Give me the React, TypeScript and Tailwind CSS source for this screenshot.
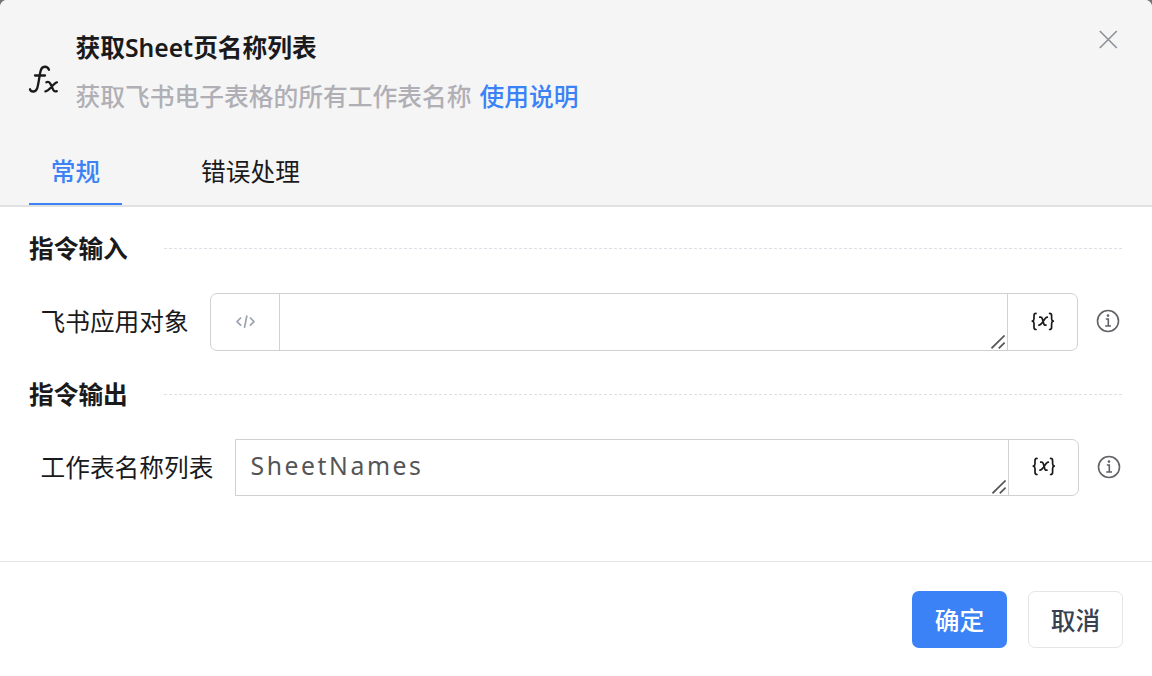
import type { ReactNode } from 'react';

function FunctionIcon() {
  return (
    <svg className="h-[32px] w-[32px] shrink-0" viewBox="0 0 32 32" fill="none" stroke="#1a1a1c" strokeWidth="2.300" strokeLinecap="round" strokeLinejoin="round">
      <path d="M3 26.300c.9 2.900 5.500 3.200 7.100-.8 1.500-3.900 2.200-12.900 3.600-17.900 1.300-4.900 6.500-5.100 8.300-.8" />
      <path d="M8 12.500h10" />
      <path d="M19.400 19.200c2.200-.9 3.200-.1 4 1.600l2.800 6c.8 1.600 1.800 2 3.600 1.300M30 19.300c-3.200 0-7.400 9.200-11.600 9" />
    </svg>
  );
}

function CodeIcon() {
  return (
    <svg className="h-[14px] w-[20px]" viewBox="0 0 20 14" fill="none" stroke="#9ca3af" strokeWidth="1.700" strokeLinecap="round" strokeLinejoin="round">
      <path d="M5.600 3 2 6.600l3.600 3.600M15.400 3 19 6.600l-3.600 3.600M11.800 1 9.600 12.200" />
    </svg>
  );
}

function VariableIcon() {
  return (
    <svg className="h-[20px] w-[24px]" viewBox="0 0 24 20" fill="none" stroke="#1a1a1c" strokeWidth="1.700" strokeLinecap="round" strokeLinejoin="round">
      <path d="M5 1.400C3.500 1.400 3 2.300 3 3.700v3c0 1.500-.5 2.200-1.700 2.400C2.500 9.300 3 10.100 3 11.500v3.700c0 1.400.5 2.300 2 2.300M18.600 1.400c1.500 0 2 .9 2 2.300v3c0 1.500.5 2.200 1.700 2.400-1.200.2-1.700 1-1.700 2.400v3.700c0 1.400-.5 2.300-2 2.300" />
      <path d="M8.800 5.200c1.700-.4 2.200.4 2.600 1.700l1.300 4.600c.4 1.400 1 2 2.300 1.600M16.300 5.200c-2.800 0-5.200 8-8.400 7.900" />
    </svg>
  );
}

function InfoIcon() {
  return (
    <svg className="h-[24px] w-[24px] shrink-0" viewBox="0 0 24 24" fill="none" stroke="#606266" strokeWidth="1.600">
      <circle cx="12" cy="12" r="10.500" />
      <path d="M9.800 10h2.500v6.800M9.200 17h5.800" />
      <circle cx="12" cy="6.600" r="1.300" fill="#606266" stroke="none" />
    </svg>
  );
}

function ResizeGrip() {
  return (
    <svg className="absolute right-[1px] bottom-[1px] h-[14px] w-[15px]" viewBox="0 0 15 14" fill="none" stroke="#555" strokeWidth="1.700">
      <path d="M.5 13.300 13.600.5M7.800 13.300l5.800-5.600" />
    </svg>
  );
}

function SectionTitle({ children }: { children: ReactNode }) {
  return (
    <div className="flex h-[40px] items-center">
      <h2 className="w-[135px] shrink-0 pt-[2px] font-bold">{children}</h2>
      <div className="-mr-px h-px flex-1 bg-[repeating-linear-gradient(90deg,#dcdfe6_0_3px,transparent_3px_5px)]" />
    </div>
  );
}

export default function App() {
  return (
    <div className="h-[676px] w-[1152px] overflow-hidden bg-[#747474]">
      <div className="flex h-full flex-col rounded-t-[7px] bg-white font-['Noto_Sans','Noto_Sans_CJK_SC',sans-serif] text-[24.700px] leading-[36px] text-[#1a1a1c]">
        <header className="flex h-[207px] flex-col rounded-t-[7px] border-b-2 border-[#e2e2e3] bg-[#f5f5f5] px-[29px]">
          <div className="flex h-[138px]">
            <div className="w-[46.500px] pt-[63px]"><div className="-ml-[2px]"><FunctionIcon /></div></div>
            <div className="flex-1 pt-[30px]">
              <h1 className="whitespace-nowrap font-bold"><span>获取</span><span className="font-semibold">Sheet</span><span>页名称列表</span></h1>
              <p className="mt-[13px] whitespace-nowrap text-[24.750px] font-medium text-[#b0afb5]">获取飞书电子表格的所有工作表名称<span className="tracking-[1.500px]"> </span><a className="text-[#3b82f6]">使用说明</a></p>
            </div>
            <button aria-label="关闭" className="mt-[30px] mr-[5px] h-[20px] w-[20px]">
              <svg viewBox="0 0 20 20" fill="none" stroke="#909399" strokeWidth="1.700"><path d="m1.800 1 17 17M18.800 1l-17 17" /></svg>
            </button>
          </div>
          <nav className="flex h-[67px]">
            <button className="w-[93px] border-b-2 border-[#3b82f6] pt-[2px] font-medium text-[#3b82f6]">常规</button>
            <button className="ml-[50px] w-[157px] border-b-2 border-transparent pt-[2px]">错误处理</button>
          </nav>
        </header>

        <main className="h-[354px] px-[29px] pt-[21px]">
          <SectionTitle>指令输入</SectionTitle>
          <div className="mt-[25px] flex h-[58px] items-center pl-[11.500px]">
            <label className="w-[169.500px] shrink-0">飞书应用对象</label>
            <div className="flex h-[58px] w-[868px] rounded-[7px] border border-[#d1d1d3]">
              <div className="flex w-[69px] items-center justify-center border-r border-[#d1d1d3]"><CodeIcon /></div>
              <div className="relative flex-1"><ResizeGrip /></div>
              <button className="flex w-[70px] items-center justify-center border-l border-[#d1d1d3]"><VariableIcon /></button>
            </div>
            <div className="ml-[18px] pb-[2px]"><InfoIcon /></div>
          </div>
          <div className="h-[23px]" />
          <SectionTitle>指令输出</SectionTitle>
          <div className="mt-[25px] flex h-[57px] items-center pl-[11.500px]">
            <label className="w-[194.500px] shrink-0">工作表名称列表</label>
            <div className="flex h-[57px] w-[844px] rounded-r-[7px] border border-[#d1d1d3]">
              <div className="relative flex flex-1 items-center pb-[3px] pl-[14.500px] tracking-[2.600px] text-[#555]">SheetNames<ResizeGrip /></div>
              <button className="flex w-[70px] items-center justify-center border-l border-[#d1d1d3] pb-[1px]"><VariableIcon /></button>
            </div>
            <div className="ml-[18px] pb-[2px]"><InfoIcon /></div>
          </div>
        </main>

        <footer className="flex flex-1 items-start justify-end gap-[21px] border-t border-[#e5e5e7] px-[29px] pt-[29px] font-medium">
          <button className="h-[57px] w-[95px] rounded-[7px] bg-[#3b82f6] pt-[2px] text-white">确定</button>
          <button className="h-[57px] w-[95px] rounded-[7px] border border-[#e5e5e7] pt-[2px] text-[#374151]">取消</button>
        </footer>
      </div>
    </div>
  );
}
